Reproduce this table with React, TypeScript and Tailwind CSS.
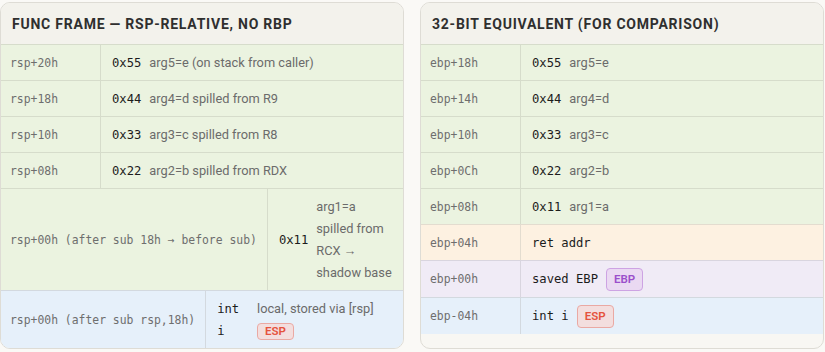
import React from "react";

type Row = {
  addr: string;
  value: string;
  desc?: string;
  badge?: "ESP" | "EBP";
  tone: "green" | "blue" | "orange" | "purple";
};

const TONES: Record<Row["tone"], string> = {
  green: "bg-[#ebf3e0] border-[#d6dccb]",
  blue: "bg-[#e6f0fa] border-[#d3d9df]",
  orange: "bg-[#fdf1e1] border-[#e3dccf]",
  purple: "bg-[#f0ebf6] border-[#d9d5df]",
};

const BADGES: Record<string, string> = {
  ESP: "text-[#e5533d] bg-[#f3dede] border-[#eaa9a3]",
  EBP: "text-[#9b4fcb] bg-[#ead9f2] border-[#cda3e3]",
};

const FRAME64: Row[] = [
  { addr: "rsp+20h", value: "0x55", desc: "arg5=e (on stack from caller)", tone: "green" },
  { addr: "rsp+18h", value: "0x44", desc: "arg4=d spilled from R9", tone: "green" },
  { addr: "rsp+10h", value: "0x33", desc: "arg3=c spilled from R8", tone: "green" },
  { addr: "rsp+08h", value: "0x22", desc: "arg2=b spilled from RDX", tone: "green" },
  { addr: "rsp+00h (after sub 18h → before sub)", value: "0x11", desc: "arg1=a spilled from RCX → shadow base", tone: "green" },
  { addr: "rsp+00h (after sub rsp,18h)", value: "int i", desc: "local, stored via [rsp]", badge: "ESP", tone: "blue" },
];

const FRAME32: Row[] = [
  { addr: "ebp+18h", value: "0x55", desc: "arg5=e", tone: "green" },
  { addr: "ebp+14h", value: "0x44", desc: "arg4=d", tone: "green" },
  { addr: "ebp+10h", value: "0x33", desc: "arg3=c", tone: "green" },
  { addr: "ebp+0Ch", value: "0x22", desc: "arg2=b", tone: "green" },
  { addr: "ebp+08h", value: "0x11", desc: "arg1=a", tone: "green" },
  { addr: "ebp+04h", value: "ret addr", tone: "orange" },
  { addr: "ebp+00h", value: "saved EBP", badge: "EBP", tone: "purple" },
  { addr: "ebp-04h", value: "int i", badge: "ESP", tone: "blue" },
];

const MONO = "font-['DejaVu_Sans_Mono',monospace]";

function Badge({ name, inline }: { name: string; inline?: boolean }) {
  return (
    <span
      className={`inline-block align-middle rounded-[4px] border px-[7px] text-[11.5px] font-semibold font-['Roboto',sans-serif] ${
        inline ? "leading-[15px]" : "leading-[21px]"
      } ${BADGES[name]}`}
    >
      {name}
    </span>
  );
}

function FrameRow({ row }: { row: Row }) {
  return (
    <div className={`flex border-t ${TONES[row.tone]}`}>
      <div
        className={`min-w-[100px] shrink-0 whitespace-nowrap border-r ${TONES[row.tone]} pl-[9px] pr-[10px] py-[6.5px] flex items-center text-[11.4px] text-[#6e6e6e] ${MONO}`}
      >
        {row.addr}
      </div>
      <div className="flex flex-1 items-center gap-2 pl-[11px] pr-[10px] py-[6.5px]">
        <span className={`text-[12.2px] text-[#1c1c1c] ${MONO}`}>{row.value}</span>
        {row.desc ? (
          <span className="text-[12.8px] text-[#6b6b6b]">
            {row.desc} {row.badge && <Badge name={row.badge} inline />}
          </span>
        ) : (
          row.badge && <Badge name={row.badge} />
        )}
      </div>
    </div>
  );
}

function Card({ title, rows }: { title: string; rows: Row[] }) {
  return (
    <section className="rounded-[10px] border border-[#dedcd5] bg-[#f8f7f3] overflow-hidden">
      <h3 className="bg-[#f3f2ec] px-[11px] h-[41px] flex items-center text-[14px] font-bold tracking-[0.055em] text-[#2f2f2f] uppercase">
        {title}
      </h3>
      <div>
        {rows.map((r) => (
          <FrameRow key={r.addr} row={r} />
        ))}
      </div>
    </section>
  );
}

export default function App() {
  return (
    <main className="min-h-[352px] bg-[#faf9f6] pt-[2px] font-['Roboto',sans-serif] text-[14px] leading-[22px]">
      <div className="grid w-[824px] grid-cols-2 gap-4">
        <Card title="Func frame — RSP-relative, no RBP" rows={FRAME64} />
        <Card title="32-bit equivalent (for comparison)" rows={FRAME32} />
      </div>
    </main>
  );
}
